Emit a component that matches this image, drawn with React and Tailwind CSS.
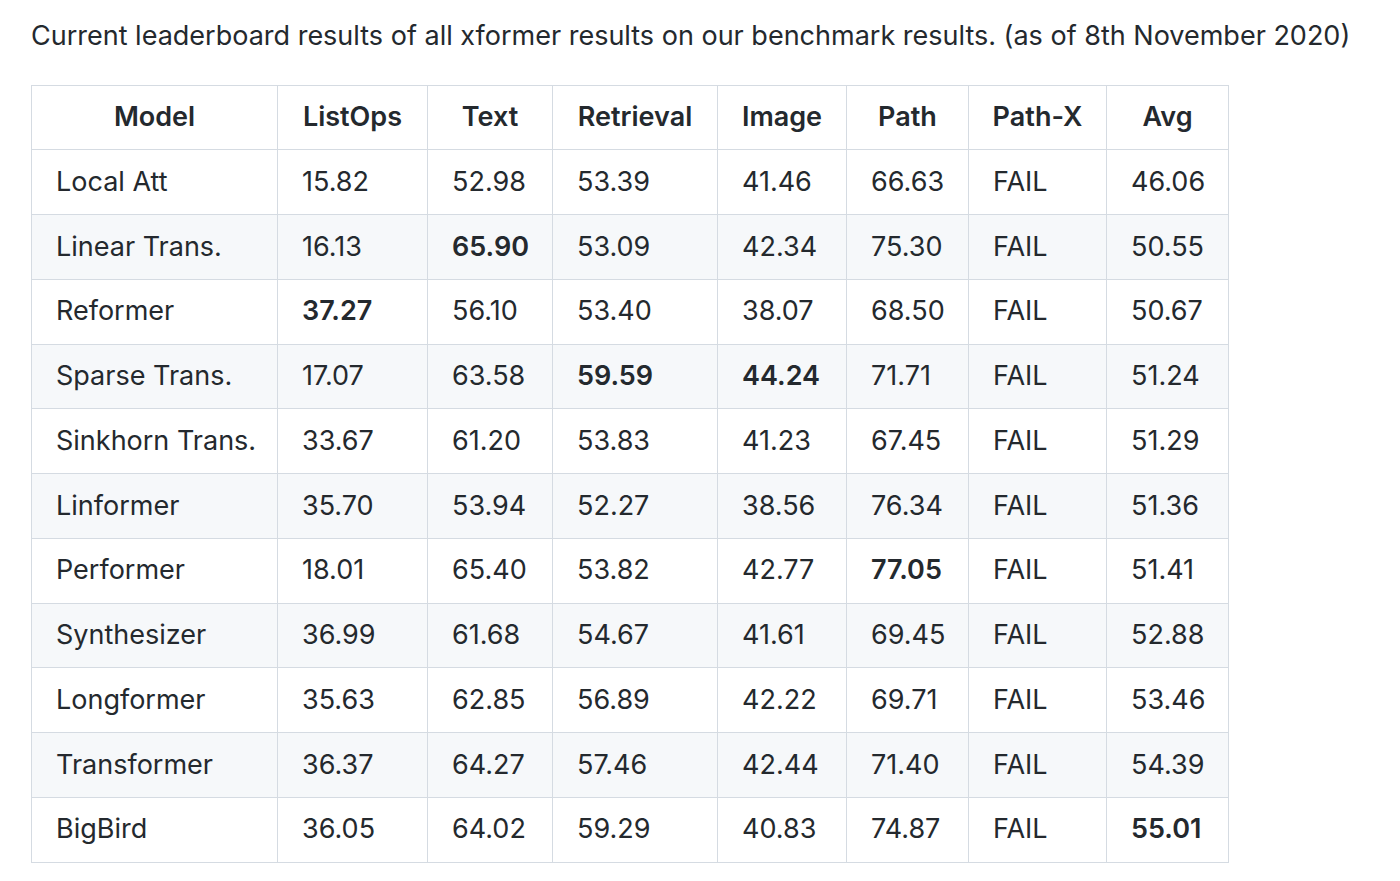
const COLS = [
  { key: 'model', label: 'Model', w: 'w-[246px]' },
  { key: 'listops', label: 'ListOps', w: 'w-[150px]' },
  { key: 'text', label: 'Text', w: 'w-[125px]' },
  { key: 'retrieval', label: 'Retrieval', w: 'w-[165px]' },
  { key: 'image', label: 'Image', w: 'w-[129px]' },
  { key: 'path', label: 'Path', w: 'w-[122px]' },
  { key: 'pathx', label: 'Path-X', w: 'w-[138px]' },
  { key: 'avg', label: 'Avg', w: 'w-[122px]' },
];

// bold marks the best score in each column
const ROWS = [
  ['Local Att', '15.82', '52.98', '53.39', '41.46', '66.63', 'FAIL', '46.06'],
  ['Linear Trans.', '16.13', '*65.90', '53.09', '42.34', '75.30', 'FAIL', '50.55'],
  ['Reformer', '*37.27', '56.10', '53.40', '38.07', '68.50', 'FAIL', '50.67'],
  ['Sparse Trans.', '17.07', '63.58', '*59.59', '*44.24', '71.71', 'FAIL', '51.24'],
  ['Sinkhorn Trans.', '33.67', '61.20', '53.83', '41.23', '67.45', 'FAIL', '51.29'],
  ['Linformer', '35.70', '53.94', '52.27', '38.56', '76.34', 'FAIL', '51.36'],
  ['Performer', '18.01', '65.40', '53.82', '42.77', '*77.05', 'FAIL', '51.41'],
  ['Synthesizer', '36.99', '61.68', '54.67', '41.61', '69.45', 'FAIL', '52.88'],
  ['Longformer', '35.63', '62.85', '56.89', '42.22', '69.71', 'FAIL', '53.46'],
  ['Transformer', '36.37', '64.27', '57.46', '42.44', '71.40', 'FAIL', '54.39'],
  ['BigBird', '36.05', '64.02', '59.29', '40.83', '74.87', 'FAIL', '*55.01'],
];

function Cell({ value }) {
  const bold = value.startsWith('*');
  const text = bold ? value.slice(1) : value;
  return (
    <td className="border border-[#d5dbe2] px-[24px] h-[64.75px] align-middle whitespace-nowrap">
      {bold ? <strong className="font-semibold">{text}</strong> : text}
    </td>
  );
}

export default function App() {
  return (
    <div className="bg-white w-[1400px] h-[881px] text-[#24292e] font-['Inter','Liberation_Sans',Arial,sans-serif] text-[27px] leading-[1.5] pl-[31px] pt-[16px]">
      <p className="mb-[28px] whitespace-nowrap">
        Current leaderboard results of all xformer results on our benchmark results. (as of 8th November 2020)
      </p>
      <table className="border-collapse table-fixed w-[1197px]">
        <thead>
          <tr className="bg-white">
            {COLS.map(c => (
              <th key={c.key} className={`${c.w} border border-[#d5dbe2] px-0 h-[64.75px] font-semibold text-center whitespace-nowrap`}>
                {c.label}
              </th>
            ))}
          </tr>
        </thead>
        <tbody>
          {ROWS.map((r, i) => (
            <tr key={r[0]} className={i % 2 === 1 ? 'bg-[#f6f8fa]' : 'bg-white'}>
              {r.map((v, j) => <Cell key={j} value={v} />)}
            </tr>
          ))}
        </tbody>
      </table>
    </div>
  );
}
